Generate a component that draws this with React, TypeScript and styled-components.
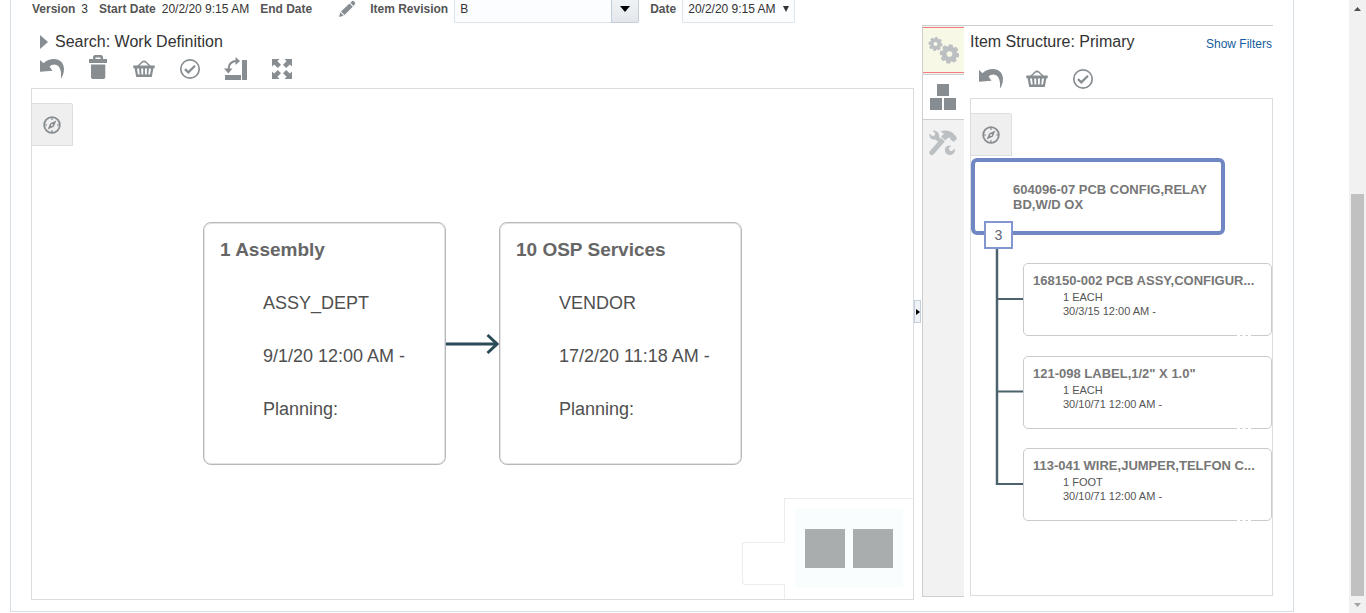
import React from "react";
import styled, { createGlobalStyle } from "styled-components";

const GlobalStyle = createGlobalStyle`
  * { box-sizing: border-box; }
  body {
    margin: 0;
    background: #fff;
    color: #333;
    font: 12px/18px "Liberation Sans", Arial, sans-serif;
  }
  button, input, select { font: inherit; color: inherit; }
`;

/* ---------- page frame ---------- */

const Page = styled.div`
  display: flex;
  min-height: 100vh;
`;

const Panel = styled.main`
  flex: 1;
  min-width: 0;
  display: flex;
  flex-direction: column;
  margin: 0 55px 1px 10px;
  padding: 0 20px 11px;
  border: 1px solid #d6dfe6;
  border-top: 0;
`;

const ScrollRail = styled.div`
  position: sticky;
  top: 0;
  width: 17px;
  height: 100vh;
  display: flex;
  flex-direction: column;
  background: #f1f1f1;
`;

const RailArrow = styled.button<{ $tone: string }>`
  display: flex;
  align-items: center;
  justify-content: center;
  height: 17px;
  padding: 0;
  border: 0;
  background: none;
  color: ${(p) => p.$tone};
`;

const RailTrack = styled.div`
  flex: 1;
  display: grid;
  grid-template-rows: 177fr 402fr;
  padding: 0 2px;
`;

const RailThumb = styled.div`
  grid-row: 2;
  background: #c1c1c1;
`;

/* ---------- header form ---------- */

const FormRow = styled.form`
  display: flex;
  align-items: flex-start;
  gap: 11px;
  height: 25px;
  padding-left: 1px;
  white-space: nowrap;
`;

const Field = styled.div`
  display: flex;
  gap: 6px;
`;

const Label = styled.label`
  font-weight: bold;
  color: #555;
`;

const EditButton = styled.button`
  display: flex;
  margin: 0 3px 0 16px;
  padding: 0;
  border: 0;
  background: none;
  color: #878d90;
`;

const Combo = styled.div`
  display: flex;
  height: 23px;
`;

const ComboInput = styled.input`
  width: 157px;
  padding: 0 5px 4px;
  border: 1px solid #dce4ea;
  border-width: 0 0 1px 1px;
  border-radius: 0 0 0 2px;
  background: #fcfdff;
  outline: 0;
`;

const ComboButton = styled.button`
  display: flex;
  align-items: center;
  justify-content: center;
  width: 28px;
  padding: 0 0 4px;
  border: 1px solid #c3cfdb;
  border-top: 0;
  border-radius: 0 0 2px 0;
  background: linear-gradient(#f0f3f6, #e3e7eb);
  color: #000;
`;

const SelectWrap = styled.div`
  display: grid;
  align-items: start;
  justify-items: end;
  > * { grid-area: 1 / 1; }
  svg { margin: 6px 6px 0 0; pointer-events: none; }
`;

const Select = styled.select`
  appearance: none;
  width: 113px;
  height: 23px;
  padding: 0 14px 4px 5px;
  border: 1px solid #dce4ea;
  border-top: 0;
  border-radius: 0 0 2px 2px;
  background: #fcfdff;
`;

/* ---------- workspace ---------- */

const Workspace = styled.div`
  flex: 1;
  display: flex;
  min-height: 575px;
`;

const WorkColumn = styled.section`
  flex: 1;
  min-width: 0;
  display: flex;
  flex-direction: column;
`;

const WorkHeading = styled.h2`
  display: flex;
  align-items: center;
  gap: 7px;
  height: 32px;
  margin: 0;
  padding: 2px 0 0 9px;
  font-size: 16px;
  font-weight: normal;
`;

const Toolbar = styled.div<{ $height: number }>`
  display: flex;
  align-items: flex-start;
  gap: 22px;
  height: ${(p) => p.$height}px;
  padding-left: 9px;
`;

const ToolButton = styled.button`
  display: flex;
  padding: 0;
  border: 0;
  background: none;
  color: #878d90;
  svg { overflow: visible; }
`;

const Canvas = styled.div`
  position: relative;
  flex: 1;
  padding-top: 14px;
  border: 1px solid #d9dde1;
`;

const CompassButton = styled.button`
  display: flex;
  align-items: center;
  justify-content: center;
  width: 41px;
  height: 43px;
  padding: 0;
  border: 1px solid #dcdfe2;
  border-left: 0;
  border-radius: 0 2px 0 0;
  background: #efefef;
  color: #878d90;
`;

const Operation = styled.article<{ $left: number }>`
  position: absolute;
  top: 133px;
  left: ${(p) => p.$left}px;
  width: 243px;
  height: 243px;
  padding: 16px;
  border: 1px solid #b8b8b8;
  border-radius: 8px;
  box-shadow: inset 0 0 0 1px #e4e4e4;
  background: #fff;
  color: #4f4f4f;
`;

const OperationTitle = styled.h3`
  margin: 0 0 16px;
  font-size: 19px;
  line-height: 22px;
  color: #666;
`;

const OperationLine = styled.div`
  padding-left: 43px;
  font-size: 18px;
  line-height: 53px;
  white-space: nowrap;
`;

const Arrow = styled.svg`
  position: absolute;
  top: 243px;
  left: 414px;
`;

const Overview = styled.div`
  position: absolute;
  right: 0;
  bottom: 0;
  display: flex;
  align-items: flex-end;
`;

const OverviewTab = styled.button`
  width: 43px;
  height: 43px;
  margin: 0 -1px 14px 0;
  z-index: 1;
  border: 1px solid #ececec;
  border-right: 0;
  border-radius: 3px 0 0 3px;
  background: #fff;
`;

const OverviewBox = styled.div`
  width: 129px;
  height: 101px;
  padding: 9px 10px 11px;
  border: 1px solid #ececec;
  border-width: 1px 0 0 1px;
  background: #fff;
`;

const OverviewMap = styled.div`
  display: flex;
  align-items: center;
  justify-content: center;
  gap: 8px;
  height: 80px;
  background: #f9fdfe;
`;

const OverviewNode = styled.div`
  width: 40px;
  height: 39px;
  background: #a9adae;
`;

const Splitter = styled.div`
  display: flex;
  align-items: center;
  width: 8px;
  padding-bottom: 2px;
`;

const SplitterButton = styled.button`
  display: flex;
  align-items: center;
  justify-content: center;
  width: 7px;
  height: 23px;
  padding: 0;
  border: 1px solid #c3cfdb;
  background: #eff3f7;
  color: #000;
`;

/* ---------- item structure side ---------- */

const SidePane = styled.aside`
  display: flex;
  width: 351px;
  margin-bottom: 3px;
  border-top: 1px solid #ccd0d3;
`;

const TabStrip = styled.div`
  width: 42px;
  padding-top: 1px;
  border: 1px solid #cfcfcf;
  border-width: 0 0 1px 1px;
  background: #f2f2f2;
`;

const Tab = styled.button<{ $kind: "hot" | "active" | "plain" }>`
  display: flex;
  align-items: center;
  justify-content: center;
  width: 100%;
  height: 46px;
  padding: 0 2px 0 0;
  border: 0 solid ${(p) => (p.$kind === "hot" ? "#f57c7c" : "#cfcfcf")};
  border-width: ${(p) => (p.$kind === "plain" ? 0 : 1)}px 0;
  margin-bottom: ${(p) => (p.$kind === "hot" ? 1 : 0)}px;
  background: ${(p) =>
    p.$kind === "hot" ? "#f8f8e7" : p.$kind === "active" ? "#fff" : "none"};
  color: ${(p) => (p.$kind === "active" ? "#878d90" : "#bcc0c3")};
`;

const StructureColumn = styled.section`
  flex: 1;
  min-width: 0;
  display: flex;
  flex-direction: column;
  margin: 0 0 1px 6px;
`;

const StructureHeader = styled.header`
  display: flex;
  align-items: center;
  justify-content: space-between;
  height: 32px;
  margin-bottom: 9px;
  padding-right: 1px;
`;

const StructureTitle = styled.h2`
  margin: 0;
  font-size: 16px;
  font-weight: normal;
`;

const FilterLink = styled.a`
  padding-top: 4px;
  color: #145c9e;
  text-decoration: none;
`;

const RootItem = styled.article`
  position: absolute;
  top: 59px;
  left: 0;
  width: 254px;
  height: 77px;
  padding: 20px 6px 0 38px;
  border: 4px solid #7087c3;
  border-radius: 6px;
  background: #fff;
  color: #777;
  font-size: 13px;
  font-weight: bold;
  line-height: 15px;
`;

const ChildCount = styled.button`
  position: absolute;
  top: 122px;
  left: 13px;
  width: 29px;
  height: 28px;
  padding: 0;
  border: 2px solid #8496d0;
  background: #fff;
  color: #5f6373;
  font-size: 14px;
`;

const Connectors = styled.svg`
  position: absolute;
  top: 150px;
  left: 24px;
`;

const ChildItem = styled.article<{ $top: number }>`
  position: absolute;
  top: ${(p) => p.$top}px;
  left: 52px;
  right: 0;
  height: 73px;
  padding: 9px 0 0 9px;
  border: 1px solid #c9cbcd;
  border-radius: 5px;
  background: #fff;
  color: #555;
  font-size: 11px;
  line-height: 14px;
  white-space: nowrap;

  &::after {
    content: "";
    position: absolute;
    right: 20px;
    bottom: -1px;
    width: 14px;
    border-bottom: 1px dashed #fff;
  }
`;

const ChildTitle = styled.h3`
  margin: 0 0 2px;
  color: #777;
  font-size: 13px;
  line-height: 15px;
`;

const ChildLine = styled.div`
  padding-left: 30px;
`;

/* ---------- icons ---------- */

const Triangle = ({ w, h, d }: { w: number; h: number; d: string }) => (
  <svg width={w} height={h} viewBox={`0 0 ${w} ${h}`} fill="currentColor" aria-hidden>
    <path d={d} />
  </svg>
);

const Icon = ({ children }: { children: React.ReactNode }) => (
  <svg width="24" height="24" viewBox="0 0 24 24" fill="currentColor" aria-hidden>
    {children}
  </svg>
);

const UndoIcon = () => (
  <Icon>
    <path d="M0 3 3.500 6.300C6.500 3.300 10 2 14 2c6 0 10 4.200 10 10 0 4-1.200 7-3.200 9.800C22 15 20 7.800 14.500 7.600c-2 0-3.700.7-5 2L12.500 13.700 0 14.800Z" />
  </Icon>
);

const TrashIcon = () => (
  <Icon>
    <path d="M7 2V-.5L8.500-2h7L17 -.5V2h4v4H3V2ZM9.500 2h5V.5h-5Z" fillRule="evenodd" />
    <path d="M5 7.500h14.300V20.500L18 22H6.300L5 20.500Z" />
  </Icon>
);

const BasketIcon = () => (
  <Icon>
    <path d="M5.500 9.500 10 5.300Q12 3.500 14 5.300L18.500 9.500" fill="none" stroke="currentColor" strokeWidth="1.500" />
    <path d="M1.300 8.500h21.400v2.700h-1.300L19.800 20H4.200L2.600 11.200H1.300ZM5 11.500l1 6h1.700l-.7-6ZM9.200 11.500l.3 6h1.700v-6ZM13 11.500v6h1.700l.3-6ZM17 11.500l-.7 6H18l1-6Z" fillRule="evenodd" />
  </Icon>
);

const CheckIcon = () => (
  <Icon>
    <g fill="none" stroke="currentColor">
      <circle cx="12" cy="12" r="9.200" strokeWidth="1.700" />
      <path d="m7 12.200 3.300 3.200L17 8.700" strokeWidth="2.300" />
    </g>
  </Icon>
);

const RotateIcon = () => (
  <Icon>
    <path d="M1 18h16v5H1ZM18 3h5v20h-5Z" />
    <path d="M4.500 12.500C4.500 7 7.500 4 13 4" fill="none" stroke="currentColor" strokeWidth="2" />
    <path d="M11.500 0 16 4l-4.500 4ZM0 11.500h8.500L4.300 16.500Z" />
  </Icon>
);

const ExpandIcon = () => (
  <Icon>
    {[0, 90, 180, 270].map((a) => (
      <path key={a} transform={`rotate(${a} 12 12)`} d="M2 2h7.500L7.400 4.200l3.600 3.600-3.200 3.200-3.600-3.600L2 9.500Z" />
    ))}
  </Icon>
);

const CompassIcon = () => (
  <svg width="18" height="18" viewBox="0 0 18 18" aria-hidden>
    <circle cx="9" cy="9" r="7.800" fill="none" stroke="currentColor" strokeWidth="1.800" />
    <path d="M9 2v2M9 14v2M2 9h2M14 9h2" stroke="currentColor" strokeWidth="1.200" />
    <path d="M13.500 4.500 10.700 10.700 4.500 13.500 7.300 7.300Z" fill="currentColor" />
    <circle cx="9" cy="9" r="1" fill="#efefef" />
  </svg>
);

const PencilIcon = () => (
  <svg width="17" height="17" viewBox="0 0 17 17" fill="currentColor" aria-hidden>
    <path d="M0 17 1.300 12.300 4.700 15.700ZM2 11.500 10.500 3.500 13.800 6.800 5.500 15ZM11.300 2.800 13.200 1Q14 .5 14.800 1.200L16 2.500Q16.500 3.300 16 4L14.500 6Z" />
  </svg>
);

const Gear = ({ x, y, r }: { x: number; y: number; r: number }) => (
  <g transform={`translate(${x} ${y})`}>
    <circle r={r * 0.54} fill="none" stroke="currentColor" strokeWidth={r * 0.5} />
    {[0, 45, 90, 135, 180, 225, 270, 315].map((a) => (
      <path
        key={a}
        transform={`rotate(${a + 8}) scale(${r / 10})`}
        d="M-2.600-7 -1.900-10H1.900L2.600-7Z"
        fill="currentColor"
      />
    ))}
  </g>
);

const GearsIcon = () => (
  <svg width="32" height="28" viewBox="0 0 32 28" aria-hidden>
    <Gear x={8.5} y={8} r={7} />
    <Gear x={22.5} y={18} r={9.7} />
  </svg>
);

const BlocksIcon = () => (
  <svg width="26" height="26" viewBox="0 0 26 26" fill="currentColor" aria-hidden>
    <path d="M7 0h12v12H7ZM0 14h12v12H0ZM14 14h12v12H14Z" />
  </svg>
);

const ToolsIcon = () => (
  <svg width="28" height="26" viewBox="0 0 28 26" fill="currentColor" aria-hidden>
    <path d="M3.500.5 6.300 3.500 5.500 5.500 3.500 6.300.4 3.500C-.3 7.500 2.800 10.500 6.500 9.500L9.500 12.300 12.300 9.500 10 6.700C10.800 3 7.500-.3 3.500.5Z" />
    <path d="M16.500 17.200Q18.800 15 22.200 15.700L19.800 18.300 20.500 20.500 22.700 21.200 25.800 18.500C26.500 22.500 24 25.200 20.500 25 17 24.700 14.800 21 16.500 17.200Z" />
    <path d="M11.500 1.200C16-.2 21 .2 24 3L25 4.800 26.300 5.200 28 8.500 24.800 12 21.500 9.500 21.200 7.800 19 7.800 16.300 10.500 12 6.500 15 4Z" />
    <path d="M12.300 8 15.800 11.500 4.800 24.300Q2.700 26 1 24.400-.5 22.500 1.200 20.700Z" />
  </svg>
);

/* ---------- data ---------- */

const operations = [
  { left: 171, title: "1 Assembly", lines: ["ASSY_DEPT", "9/1/20 12:00 AM -", "Planning:"] },
  { left: 467, title: "10 OSP Services", lines: ["VENDOR", "17/2/20 11:18 AM -", "Planning:"] },
];

const components = [
  { top: 164, title: "168150-002 PCB ASSY,CONFIGUR...", lines: ["1 EACH", "30/3/15 12:00 AM -"] },
  { top: 257, title: '121-098 LABEL,1/2" X 1.0"', lines: ["1 EACH", "30/10/71 12:00 AM -"] },
  { top: 349, title: "113-041 WIRE,JUMPER,TELFON C...", lines: ["1 FOOT", "30/10/71 12:00 AM -"] },
];

const workTools = [
  { name: "Undo", Glyph: UndoIcon },
  { name: "Delete", Glyph: TrashIcon },
  { name: "Add to basket", Glyph: BasketIcon },
  { name: "Validate", Glyph: CheckIcon },
  { name: "Change orientation", Glyph: RotateIcon },
  { name: "Fit to screen", Glyph: ExpandIcon },
];

const structureTools = [workTools[0], workTools[2], workTools[3]];

const Tools = ({ items, height }: { items: typeof workTools; height: number }) => (
  <Toolbar $height={height}>
    {items.map(({ name, Glyph }) => (
      <ToolButton key={name} type="button" aria-label={name}>
        <Glyph />
      </ToolButton>
    ))}
  </Toolbar>
);

export default function App() {
  return (
    <>
      <GlobalStyle />
      <Page>
        <Panel>
          <FormRow>
            <Field>
              <Label as="span">Version</Label>
              <span>3</span>
            </Field>
            <Field>
              <Label as="span">Start Date</Label>
              <span>20/2/20 9:15 AM</span>
            </Field>
            <Label as="span">End Date</Label>
            <EditButton type="button" aria-label="Edit">
              <PencilIcon />
            </EditButton>
            <Field>
              <Label htmlFor="revision">Item Revision</Label>
              <Combo>
                <ComboInput id="revision" defaultValue="B" />
                <ComboButton type="button" aria-label="Show revisions">
                  <Triangle w={10} h={6} d="M0 0h10L5 6Z" />
                </ComboButton>
              </Combo>
            </Field>
            <Field>
              <Label htmlFor="date">Date</Label>
              <SelectWrap>
                <Select id="date">
                  <option>20/2/20 9:15 AM</option>
                </Select>
                <Triangle w={6} h={6} d="M0 0h6L3 6Z" />
              </SelectWrap>
            </Field>
          </FormRow>

          <Workspace>
            <WorkColumn>
              <WorkHeading>
                <ToolButton type="button" aria-label="Expand search">
                  <Triangle w={8} h={14} d="M0 0 8 7 0 14Z" />
                </ToolButton>
                Search: Work Definition
              </WorkHeading>
              <Tools items={workTools} height={31} />
              <Canvas>
                <CompassButton type="button" aria-label="Navigator">
                  <CompassIcon />
                </CompassButton>
                {operations.map((op) => (
                  <Operation key={op.title} $left={op.left}>
                    <OperationTitle>{op.title}</OperationTitle>
                    {op.lines.map((line) => (
                      <OperationLine key={line}>{line}</OperationLine>
                    ))}
                  </Operation>
                ))}
                <Arrow width="53" height="24" viewBox="0 0 53 24" fill="none" stroke="#2b4a57" aria-hidden>
                  <path d="M0 12H50" strokeWidth="3" />
                  <path d="M41.500 3 51 12 41.500 21" strokeWidth="3" />
                </Arrow>
                <Overview>
                  <OverviewTab type="button" aria-label="Toggle overview" />
                  <OverviewBox>
                    <OverviewMap>
                      <OverviewNode />
                      <OverviewNode />
                    </OverviewMap>
                  </OverviewBox>
                </Overview>
              </Canvas>
            </WorkColumn>

            <Splitter>
              <SplitterButton type="button" aria-label="Collapse pane">
                <Triangle w={4} h={6} d="M0 0 4 3 0 6Z" />
              </SplitterButton>
            </Splitter>

            <SidePane>
              <TabStrip>
                <Tab type="button" $kind="hot" aria-label="Operations">
                  <GearsIcon />
                </Tab>
                <Tab type="button" $kind="active" aria-label="Item structure">
                  <BlocksIcon />
                </Tab>
                <Tab type="button" $kind="plain" aria-label="Resources">
                  <ToolsIcon />
                </Tab>
              </TabStrip>
              <StructureColumn>
                <StructureHeader>
                  <StructureTitle>Item Structure: Primary</StructureTitle>
                  <FilterLink href="#filters">Show Filters</FilterLink>
                </StructureHeader>
                <Tools items={structureTools} height={31} />
                <Canvas>
                  <CompassButton type="button" aria-label="Navigator">
                    <CompassIcon />
                  </CompassButton>
                  <Connectors width="28" height="237" viewBox="0 0 28 237" fill="none" stroke="#4c626c" aria-hidden>
                    <path d="M2 0V236" strokeWidth="2.500" />
                    <path d="M2 50H28M2 142.500H28M1 235H28" strokeWidth="2" />
                  </Connectors>
                  <RootItem>604096-07 PCB CONFIG,RELAY BD,W/D OX</RootItem>
                  <ChildCount type="button">3</ChildCount>
                  {components.map((item) => (
                    <ChildItem key={item.title} $top={item.top}>
                      <ChildTitle>{item.title}</ChildTitle>
                      {item.lines.map((line) => (
                        <ChildLine key={line}>{line}</ChildLine>
                      ))}
                    </ChildItem>
                  ))}
                </Canvas>
              </StructureColumn>
            </SidePane>
          </Workspace>
        </Panel>

        <ScrollRail>
          <RailArrow type="button" aria-label="Scroll up" $tone="#505050">
            <Triangle w={7} h={4} d="M0 4h7L3.500 0Z" />
          </RailArrow>
          <RailTrack>
            <RailThumb />
          </RailTrack>
          <RailArrow type="button" aria-label="Scroll down" $tone="#a3a3a3">
            <Triangle w={7} h={4} d="M0 0h7L3.500 4Z" />
          </RailArrow>
        </ScrollRail>
      </Page>
    </>
  );
}
